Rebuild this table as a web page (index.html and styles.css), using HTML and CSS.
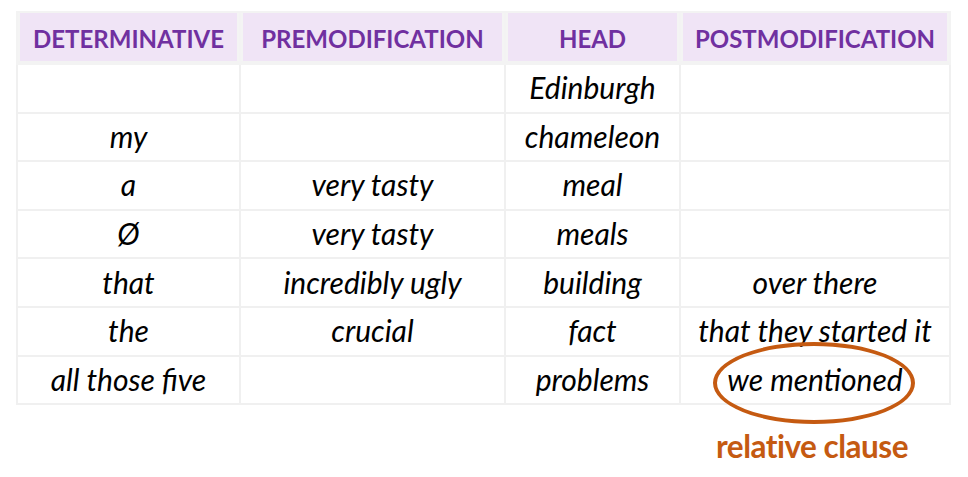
FILE: index.html
```html
<!DOCTYPE html>
<html>
<head>
<meta charset="utf-8">
<link rel="stylesheet" href="styles.css">
</head>
<body>
<div class="page">
  <table class="np">
    <colgroup>
      <col class="c1"><col class="c2"><col class="c3"><col class="c4">
    </colgroup>
    <thead>
      <tr><th>DETERMINATIVE</th><th>PREMODIFICATION</th><th>HEAD</th><th>POSTMODIFICATION</th></tr>
    </thead>
    <tbody>
      <tr><td></td><td></td><td>Edinburgh</td><td></td></tr>
      <tr><td>my</td><td></td><td>chameleon</td><td></td></tr>
      <tr><td>a</td><td>very tasty</td><td>meal</td><td></td></tr>
      <tr><td>Ø</td><td>very tasty</td><td>meals</td><td></td></tr>
      <tr><td>that</td><td>incredibly ugly</td><td>building</td><td>over there</td></tr>
      <tr><td>the</td><td>crucial</td><td>fact</td><td>that they started it</td></tr>
      <tr><td>all those five</td><td></td><td>problems</td><td class="marked">we mentioned<span class="ellipse"></span></td></tr>
    </tbody>
  </table>
  <div class="labels">
    <div></div><div></div><div></div><div class="label">relative clause</div>
  </div>
</div>
</body>
</html>
```

FILE: styles.css
```css
html, body {
  margin: 0;
  padding: 0;
  background: #ffffff;
}
body {
  font-family: Lato, "Open Sans", sans-serif;
}
.page {
  padding: 11px 19px 0 16px;
  width: 933px;
}
.np {
  width: 933px;
  border-collapse: collapse;
  table-layout: fixed;
  border: 2px solid #f0f0f0;
}
.c1 { width: 223px; }
.c2 { width: 265px; }
.c3 { width: 175px; }
.c4 { width: 270px; }
.np th {
  height: 46px;
  padding: 2px 0 0 0;
  background: #f0e4f6;
  color: #7030a0;
  font-weight: 700;
  font-size: 24px;
  text-align: center;
  vertical-align: middle;
  border: 2px solid #f3f3f3;
  border-bottom-width: 4px;
  box-shadow: inset 2px 0 0 #f4f4f4, inset -2px 0 0 #f4f4f4;
}
.np td {
  height: 44.6px;
  padding: 0 0 2px 0;
  font-style: italic;
  font-size: 30px;
  color: #000;
  text-align: center;
  vertical-align: middle;
  border: 2px solid #f0f0f0;
  white-space: nowrap;
}
.np td.marked {
  position: relative;
}
.ellipse {
  position: absolute;
  left: 32px;
  top: -15px;
  width: 194px;
  height: 74px;
  border: 4px solid #c55a11;
  border-radius: 50%;
}
.labels {
  display: grid;
  grid-template-columns: 223px 265px 175px 270px;
  padding-top: 22px;
}
.label {
  text-align: center;
  color: #c55a11;
  font-weight: 700;
  font-size: 31.5px;
  letter-spacing: -0.5px;
  padding-right: 4px;
}
```
